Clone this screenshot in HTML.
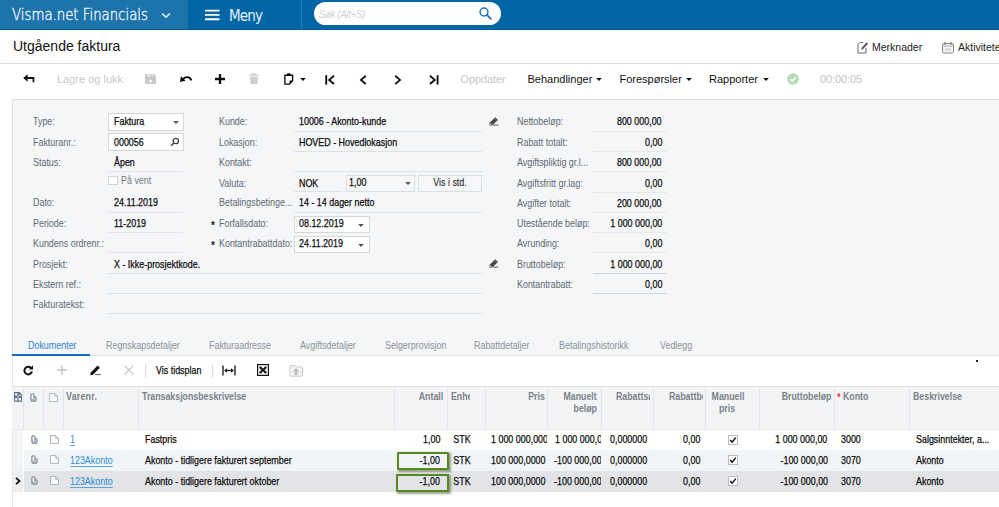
<!DOCTYPE html>
<html><head><meta charset="utf-8"><title>Utgående faktura</title>
<style>
*{box-sizing:border-box;margin:0;padding:0}
html,body{width:999px;height:507px;overflow:hidden;background:#fff}
body{position:relative;font-family:"Liberation Sans",Arial,sans-serif;font-size:11px;color:#111}
.a{position:absolute;display:block}
.t{position:absolute;white-space:nowrap}
.v{-webkit-text-stroke:0.25px currentColor}
</style></head><body>
<div class="a" style="left:0px;top:0px;width:999px;height:30.3px;background:#0065a5;"></div>
<div class="a" style="left:0px;top:0px;width:188.2px;height:30.3px;background:#1c74ab;"></div>
<div class="a" style="left:0px;top:28.8px;width:999px;height:1.5px;background:#01579a;"></div>
<div class="t " style="top:8.46px;font-size:16px;line-height:14px;color:#eef5fa;left:12px;transform-origin:0 50%;transform:scaleX(0.831);font-family:'DejaVu Sans Light','DejaVu Sans',sans-serif;font-weight:200;-webkit-text-stroke:0.4px #eef5fa;">Visma.net Financials</div>
<svg class="a" style="left:159px;top:11px" width="14" height="9" viewBox="0 0 14 9"><path d="M3.2 2.6 L7 6.2 L10.8 2.6" fill="none" stroke="#e6f1f8" stroke-width="1.5"/></svg>
<svg class="a" style="left:205px;top:9px" width="15" height="12" viewBox="0 0 15 12"><path d="M0 1.6h14.5M0 5.9h14.5M0 10.2h14.5" stroke="#fff" stroke-width="1.9"/></svg>
<div class="t " style="top:8.80px;font-size:15px;line-height:14px;color:#e6f1f8;left:229px;transform-origin:0 50%;font-family:'DejaVu Sans Condensed','DejaVu Sans',sans-serif;letter-spacing:-0.8px;">Meny</div>
<div class="a" style="left:301px;top:0px;width:1px;height:29px;background:#2b7cb3;"></div>
<div class="a" style="left:314px;top:2px;width:187px;height:23px;border-radius:12px;background:#fff"></div>
<div class="t " style="top:7.54px;font-size:10px;line-height:14px;color:#d2d2d2;left:318.5px;transform-origin:0 50%;font-style:italic;letter-spacing:-0.45px;">Søk (Alt+S)</div>
<svg class="a" style="left:478px;top:6px" width="15" height="15" viewBox="0 0 15 15"><circle cx="6" cy="6" r="3.9" fill="none" stroke="#1a75c4" stroke-width="1.5"/><path d="M9 9 L12.8 12.8" stroke="#1a75c4" stroke-width="1.8" stroke-linecap="round"/></svg>
<div class="t " style="top:39.15px;font-size:14px;line-height:14px;color:#111;left:13px;transform-origin:0 50%;">Utgående faktura</div>
<div class="a" style="left:0px;top:63px;width:999px;height:1px;background:#dedede;"></div>
<svg class="a" style="left:857px;top:41px" width="12" height="13" viewBox="0 0 12 13"><path d="M6 1.5H3.2L1 3.7V12h8V7" fill="none" stroke="#666" stroke-width="1"/><path d="M4 9l1-2.6L9.6 1.3l1.4 1.4L6.2 8z" fill="#555"/></svg>
<div class="t " style="top:40.36px;font-size:10.5px;line-height:14px;color:#222;left:872px;transform-origin:0 50%;">Merknader</div>
<svg class="a" style="left:942px;top:41px" width="12" height="13" viewBox="0 0 12 13"><rect x="0.5" y="2.5" width="11" height="9.5" rx="1.5" fill="#f4f4f4" stroke="#888"/><path d="M0.5 5h11" stroke="#aaa"/><path d="M3 0.8v3M9 0.8v3" stroke="#777" stroke-width="1.2"/><rect x="3" y="7" width="6" height="3" fill="#ddd"/></svg>
<div class="t " style="top:40.36px;font-size:10.5px;line-height:14px;color:#222;left:958px;transform-origin:0 50%;">Aktiviteter</div>
<svg class="a" style="left:23px;top:74.3px" width="12" height="9" viewBox="0 0 12 9"><path d="M0.2 4 L4.6 0.2 V3 H11.3 V8.2 H9.6 V5 H4.6 V7.8 Z" fill="#111"/></svg>
<div class="t " style="top:72.19px;font-size:11px;line-height:14px;color:#c8c8c8;left:57px;transform-origin:0 50%;">Lagre og lukk</div>
<svg class="a" style="left:145px;top:74px" width="11" height="10" viewBox="0 0 11 10"><path d="M0 0h9.2l1.8 1.8v8.2H0z" fill="#c9c9c9"/><rect x="2.2" y="0" width="5.6" height="3" fill="#e6e6e6"/><rect x="5.2" y="0.4" width="1.6" height="2.2" fill="#c9c9c9"/><circle cx="5.5" cy="6.9" r="1.5" fill="#fff"/></svg>
<svg class="a" style="left:179.5px;top:75.3px" width="12" height="8" viewBox="0 0 12 8"><path d="M3 4.6 C4.6 1.4 9.8 1 11.4 5.4" fill="none" stroke="#111" stroke-width="1.9"/><path d="M0 7 L0.9 1.2 L5.6 5.8 Z" fill="#111"/></svg>
<svg class="a" style="left:215px;top:73.7px" width="10" height="10" viewBox="0 0 10 10"><path d="M5 0v10M0 5h10" stroke="#111" stroke-width="2.3"/></svg>
<svg class="a" style="left:249px;top:73px" width="10" height="11" viewBox="0 0 10 11"><path d="M0.3 1.4h9.4v1.3h-9.4zM3.4 0.2h3.2v1.3H3.4zM1.2 3.4h7.6l-0.6 7.6H1.8z" fill="#cbcbcb"/><path d="M3.5 4.2v6M5 4.2v6M6.5 4.2v6" stroke="#dcdcdc" stroke-width="0.6"/></svg>
<svg class="a" style="left:284.3px;top:73px" width="10" height="12" viewBox="0 0 10 12"><path d="M0.9 2.3h7.7v5.4l-3.1 3.4H0.9z" fill="none" stroke="#111" stroke-width="1.4"/><rect x="2.9" y="0.3" width="3.7" height="2.4" rx="0.6" fill="#111"/><path d="M8.6 7.6H5.6v3.3z" fill="#111"/></svg>
<svg class="a" style="left:299.5px;top:78px" width="6" height="3" viewBox="0 0 6 3"><path d="M0.2 0.1h5.6L3 3z" fill="#111"/></svg>
<svg class="a" style="left:324px;top:75px" width="12" height="10" viewBox="0 0 12 10"><path d="M2.2 0.2v9.4" stroke="#111" stroke-width="1.9"/><path d="M10 0.8 L5.2 4.9 L10 9" fill="none" stroke="#111" stroke-width="1.9"/></svg>
<svg class="a" style="left:358px;top:74.6px" width="10" height="10" viewBox="0 0 10 10"><path d="M7.8 0.7 L3 4.9 L7.8 9.1" fill="none" stroke="#111" stroke-width="1.9"/></svg>
<svg class="a" style="left:393px;top:74.8px" width="10" height="10" viewBox="0 0 10 10"><path d="M2.2 0.7 L7 4.9 L2.2 9.1" fill="none" stroke="#111" stroke-width="1.9"/></svg>
<svg class="a" style="left:427.5px;top:75px" width="12" height="10" viewBox="0 0 12 10"><path d="M9.6 0.2v9.4" stroke="#111" stroke-width="1.9"/><path d="M1.9 0.8 L6.7 4.9 L1.9 9" fill="none" stroke="#111" stroke-width="1.9"/></svg>
<div class="t " style="top:72.19px;font-size:11px;line-height:14px;color:#c6c6c6;left:460.5px;transform-origin:0 50%;letter-spacing:-0.1px;">Oppdater</div>
<div class="t " style="top:72.19px;font-size:11px;line-height:14px;color:#111;left:527.5px;transform-origin:0 50%;">Behandlinger</div>
<svg class="a" style="left:596.3px;top:78px" width="6" height="3" viewBox="0 0 6 3"><path d="M0.2 0.1h5.6L3 3z" fill="#111"/></svg>
<div class="t " style="top:72.19px;font-size:11px;line-height:14px;color:#111;left:619.5px;transform-origin:0 50%;">Forespørsler</div>
<svg class="a" style="left:686.3px;top:78px" width="6" height="3" viewBox="0 0 6 3"><path d="M0.2 0.1h5.6L3 3z" fill="#111"/></svg>
<div class="t " style="top:72.19px;font-size:11px;line-height:14px;color:#111;left:709px;transform-origin:0 50%;">Rapporter</div>
<svg class="a" style="left:762.5px;top:78px" width="6" height="3" viewBox="0 0 6 3"><path d="M0.2 0.1h5.6L3 3z" fill="#111"/></svg>
<svg class="a" style="left:787px;top:73px" width="12" height="12" viewBox="0 0 12 12"><circle cx="6" cy="6" r="5.8" fill="#b2dbb2"/><path d="M3.2 6.2 L5.2 8.2 L8.8 4" fill="none" stroke="#fff" stroke-width="1.6"/></svg>
<div class="t " style="top:72.19px;font-size:11px;line-height:14px;color:#c2c2c2;left:820px;transform-origin:0 50%;letter-spacing:-0.1px;">00:00:05</div>
<div class="a" style="left:12px;top:99px;width:987px;height:257px;background:#f5f6f8;"></div>
<div class="a" style="left:12px;top:99px;width:987px;height:1px;background:#dadbde;"></div>
<div class="a" style="left:12px;top:99px;width:1px;height:257px;background:#dfe1e4;"></div>
<div class="a" style="left:12px;top:356px;width:1px;height:151px;background:#e6e8ea;"></div>
<div class="t " style="top:114.36px;font-size:10.5px;line-height:14px;color:#5d6872;left:33px;transform-origin:0 50%;transform:scaleX(0.849);">Type:</div>
<div class="t " style="top:134.86px;font-size:10.5px;line-height:14px;color:#5d6872;left:33px;transform-origin:0 50%;transform:scaleX(0.849);">Fakturanr.:</div>
<div class="t " style="top:155.36px;font-size:10.5px;line-height:14px;color:#5d6872;left:33px;transform-origin:0 50%;transform:scaleX(0.849);">Status:</div>
<div class="t " style="top:195.36px;font-size:10.5px;line-height:14px;color:#5d6872;left:33px;transform-origin:0 50%;transform:scaleX(0.849);">Dato:</div>
<div class="t " style="top:215.86px;font-size:10.5px;line-height:14px;color:#5d6872;left:33px;transform-origin:0 50%;transform:scaleX(0.849);">Periode:</div>
<div class="t " style="top:236.36px;font-size:10.5px;line-height:14px;color:#5d6872;left:33px;transform-origin:0 50%;transform:scaleX(0.849);">Kundens ordrenr.:</div>
<div class="t " style="top:256.76px;font-size:10.5px;line-height:14px;color:#5d6872;left:33px;transform-origin:0 50%;transform:scaleX(0.849);">Prosjekt:</div>
<div class="t " style="top:277.06px;font-size:10.5px;line-height:14px;color:#5d6872;left:33px;transform-origin:0 50%;transform:scaleX(0.849);">Ekstern ref.:</div>
<div class="t " style="top:297.36px;font-size:10.5px;line-height:14px;color:#5d6872;left:33px;transform-origin:0 50%;transform:scaleX(0.849);">Fakturatekst:</div>
<div class="a" style="left:108px;top:113px;width:75.5px;height:18px;background:#fff;border:1px solid #d5d8db"></div>
<div class="t v" style="top:114.36px;font-size:10.5px;line-height:14px;color:#0c0c0c;left:114px;transform-origin:0 50%;transform:scaleX(0.849);">Faktura</div>
<svg class="a" style="left:172.5px;top:121px" width="6" height="3" viewBox="0 0 6 3"><path d="M0.2 0.1h5.6L3 3z" fill="#555"/></svg>
<div class="a" style="left:108px;top:133px;width:75.5px;height:18px;background:#fff;border:1px solid #d5d8db"></div>
<div class="t v" style="top:134.86px;font-size:10.5px;line-height:14px;color:#0c0c0c;left:114px;transform-origin:0 50%;transform:scaleX(0.849);">000056</div>
<svg class="a" style="left:170px;top:137px" width="10" height="10" viewBox="0 0 10 10"><circle cx="5.8" cy="4" r="2.7" fill="none" stroke="#444" stroke-width="1.3"/><path d="M3.8 6 L1.2 8.8" stroke="#444" stroke-width="1.6"/></svg>
<div class="t v" style="top:155.36px;font-size:10.5px;line-height:14px;color:#0c0c0c;left:114px;transform-origin:0 50%;transform:scaleX(0.849);">Åpen</div>
<div class="a" style="left:108px;top:171px;width:75px;height:1px;background:#e3e5e8;"></div>
<div class="a" style="left:108px;top:176.3px;width:9.5px;height:9px;background:#fff;border:1px solid #d2d5d8"></div>
<div class="t " style="top:172.56px;font-size:10.5px;line-height:14px;color:#717b84;left:121px;transform-origin:0 50%;transform:scaleX(0.849);">På vent</div>
<div class="t v" style="top:195.36px;font-size:10.5px;line-height:14px;color:#0c0c0c;left:114px;transform-origin:0 50%;transform:scaleX(0.849);">24.11.2019</div>
<div class="a" style="left:108px;top:212px;width:75px;height:1px;background:#e3e5e8;"></div>
<div class="t v" style="top:215.86px;font-size:10.5px;line-height:14px;color:#0c0c0c;left:114px;transform-origin:0 50%;transform:scaleX(0.849);">11-2019</div>
<div class="a" style="left:108px;top:232px;width:75px;height:1px;background:#e3e5e8;"></div>
<div class="a" style="left:108px;top:252px;width:75px;height:1px;background:#e3e5e8;"></div>
<div class="t v" style="top:256.76px;font-size:10.5px;line-height:14px;color:#0c0c0c;left:114px;transform-origin:0 50%;transform:scaleX(0.849);">X - Ikke-prosjektkode.</div>
<div class="a" style="left:108px;top:273px;width:373.5px;height:1px;background:#dfe2e5;"></div>
<div class="a" style="left:108px;top:293px;width:373.5px;height:1px;background:#dfe2e5;"></div>
<div class="a" style="left:108px;top:313px;width:373.5px;height:1px;background:#dfe2e5;"></div>
<div class="t " style="top:114.36px;font-size:10.5px;line-height:14px;color:#5d6872;left:219px;transform-origin:0 50%;transform:scaleX(0.849);">Kunde:</div>
<div class="t " style="top:134.86px;font-size:10.5px;line-height:14px;color:#5d6872;left:219px;transform-origin:0 50%;transform:scaleX(0.849);">Lokasjon:</div>
<div class="t " style="top:155.36px;font-size:10.5px;line-height:14px;color:#5d6872;left:219px;transform-origin:0 50%;transform:scaleX(0.849);">Kontakt:</div>
<div class="t " style="top:175.56px;font-size:10.5px;line-height:14px;color:#5d6872;left:219px;transform-origin:0 50%;transform:scaleX(0.849);">Valuta:</div>
<div class="t " style="top:195.36px;font-size:10.5px;line-height:14px;color:#5d6872;left:219px;transform-origin:0 50%;transform:scaleX(0.849);">Betalingsbetinge...</div>
<div class="t " style="top:215.86px;font-size:10.5px;line-height:14px;color:#5d6872;left:219px;transform-origin:0 50%;transform:scaleX(0.849);">Forfallsdato:</div>
<div class="t " style="top:236.36px;font-size:10.5px;line-height:14px;color:#5d6872;left:219px;transform-origin:0 50%;transform:scaleX(0.849);">Kontantrabattdato:</div>
<div class="t " style="top:218.53px;font-size:10px;line-height:14px;color:#222;font-weight:bold;left:211px;transform-origin:0 50%;">*</div>
<div class="t " style="top:239.03px;font-size:10px;line-height:14px;color:#222;font-weight:bold;left:211px;transform-origin:0 50%;">*</div>
<div class="t v" style="top:114.36px;font-size:10.5px;line-height:14px;color:#0c0c0c;left:299px;transform-origin:0 50%;transform:scaleX(0.849);">10006 - Akonto-kunde</div>
<div class="a" style="left:294px;top:131px;width:187.5px;height:1px;background:#dfe2e5;"></div>
<div class="t v" style="top:134.86px;font-size:10.5px;line-height:14px;color:#0c0c0c;left:299px;transform-origin:0 50%;transform:scaleX(0.849);">HOVED - Hovedlokasjon</div>
<div class="a" style="left:294px;top:151px;width:187.5px;height:1px;background:#dfe2e5;"></div>
<div class="a" style="left:294px;top:171px;width:187.5px;height:1px;background:#dfe2e5;"></div>
<div class="t v" style="top:175.56px;font-size:10.5px;line-height:14px;color:#0c0c0c;left:299px;transform-origin:0 50%;transform:scaleX(0.849);">NOK</div>
<div class="a" style="left:294px;top:190.5px;width:47px;height:1px;background:#dfe2e5;"></div>
<div class="a" style="left:346px;top:174.5px;width:68.5px;height:17.5px;background:#f6f7f8;border:1px solid #dcdfe2"></div>
<div class="t v" style="top:175.06px;font-size:10.5px;line-height:14px;color:#0c0c0c;left:349px;transform-origin:0 50%;transform:scaleX(0.849);">1,00</div>
<svg class="a" style="left:404.5px;top:182.3px" width="6" height="3" viewBox="0 0 6 3"><path d="M0.2 0.1h5.6L3 3z" fill="#555"/></svg>
<div class="a" style="left:418px;top:174.5px;width:64px;height:17.5px;background:#f6f7f8;border:1px solid #dcdfe2"></div>
<div class="t " style="top:175.06px;font-size:10.5px;line-height:14px;color:#0c0c0c;left:350px;width:200px;text-align:center;transform-origin:50% 50%;transform:scaleX(0.849);">Vis i std.</div>
<div class="t v" style="top:195.36px;font-size:10.5px;line-height:14px;color:#0c0c0c;left:299px;transform-origin:0 50%;transform:scaleX(0.849);">14 - 14 dager netto</div>
<div class="a" style="left:294px;top:212px;width:187.5px;height:1px;background:#dfe2e5;"></div>
<div class="a" style="left:294px;top:215.5px;width:75.5px;height:17.5px;background:#fff;border:1px solid #d5d8db"></div>
<div class="t v" style="top:215.86px;font-size:10.5px;line-height:14px;color:#0c0c0c;left:299px;transform-origin:0 50%;transform:scaleX(0.849);">08.12.2019</div>
<svg class="a" style="left:358px;top:223.8px" width="6" height="3" viewBox="0 0 6 3"><path d="M0.2 0.1h5.6L3 3z" fill="#555"/></svg>
<div class="a" style="left:294px;top:235.5px;width:75.5px;height:17.5px;background:#fff;border:1px solid #d5d8db"></div>
<div class="t v" style="top:236.36px;font-size:10.5px;line-height:14px;color:#0c0c0c;left:299px;transform-origin:0 50%;transform:scaleX(0.849);">24.11.2019</div>
<svg class="a" style="left:358px;top:243.8px" width="6" height="3" viewBox="0 0 6 3"><path d="M0.2 0.1h5.6L3 3z" fill="#555"/></svg>
<svg class="a" style="left:488.6px;top:117.4px" width="10" height="9" viewBox="0 0 10 9"><path d="M0.3 8.5 L0.6 5.8 L6.3 0.2 L9 2.9 L3.2 8.5 Z" fill="#484848"/><path d="M5.5 1.3 L7.9 3.7" stroke="#9a9a9a" stroke-width="0.6"/><circle cx="1.6" cy="7.3" r="0.7" fill="#eee"/><path d="M4 8.1h5.3" stroke="#484848" stroke-width="0.9"/></svg>
<svg class="a" style="left:488.6px;top:259.4px" width="10" height="9" viewBox="0 0 10 9"><path d="M0.3 8.5 L0.6 5.8 L6.3 0.2 L9 2.9 L3.2 8.5 Z" fill="#484848"/><path d="M5.5 1.3 L7.9 3.7" stroke="#9a9a9a" stroke-width="0.6"/><circle cx="1.6" cy="7.3" r="0.7" fill="#eee"/><path d="M4 8.1h5.3" stroke="#484848" stroke-width="0.9"/></svg>
<div class="t " style="top:114.36px;font-size:10.5px;line-height:14px;color:#5d6872;left:517px;transform-origin:0 50%;transform:scaleX(0.849);">Nettobeløp:</div>
<div class="t v" style="top:114.36px;font-size:10.5px;line-height:14px;color:#0c0c0c;right:337.00px;transform-origin:100% 50%;text-align:right;transform:scaleX(0.849);">800 000,00</div>
<div class="a" style="left:592.5px;top:131px;width:74.5px;height:1px;background:#e6e8ea;"></div>
<div class="t " style="top:134.86px;font-size:10.5px;line-height:14px;color:#5d6872;left:517px;transform-origin:0 50%;transform:scaleX(0.849);">Rabatt totalt:</div>
<div class="t v" style="top:134.86px;font-size:10.5px;line-height:14px;color:#0c0c0c;right:337.00px;transform-origin:100% 50%;text-align:right;transform:scaleX(0.849);">0,00</div>
<div class="a" style="left:592.5px;top:151px;width:74.5px;height:1px;background:#e6e8ea;"></div>
<div class="t " style="top:155.16px;font-size:10.5px;line-height:14px;color:#5d6872;left:517px;transform-origin:0 50%;transform:scaleX(0.849);">Avgiftspliktig gr.l...</div>
<div class="t v" style="top:155.16px;font-size:10.5px;line-height:14px;color:#0c0c0c;right:337.00px;transform-origin:100% 50%;text-align:right;transform:scaleX(0.849);">800 000,00</div>
<div class="a" style="left:592.5px;top:171px;width:74.5px;height:1px;background:#e6e8ea;"></div>
<div class="t " style="top:175.56px;font-size:10.5px;line-height:14px;color:#5d6872;left:517px;transform-origin:0 50%;transform:scaleX(0.849);">Avgiftsfritt gr.lag:</div>
<div class="t v" style="top:175.56px;font-size:10.5px;line-height:14px;color:#0c0c0c;right:337.00px;transform-origin:100% 50%;text-align:right;transform:scaleX(0.849);">0,00</div>
<div class="a" style="left:592.5px;top:192px;width:74.5px;height:1px;background:#e6e8ea;"></div>
<div class="t " style="top:195.56px;font-size:10.5px;line-height:14px;color:#5d6872;left:517px;transform-origin:0 50%;transform:scaleX(0.849);">Avgifter totalt:</div>
<div class="t v" style="top:195.56px;font-size:10.5px;line-height:14px;color:#0c0c0c;right:337.00px;transform-origin:100% 50%;text-align:right;transform:scaleX(0.849);">200 000,00</div>
<div class="a" style="left:592.5px;top:212px;width:74.5px;height:1px;background:#e6e8ea;"></div>
<div class="t " style="top:216.06px;font-size:10.5px;line-height:14px;color:#5d6872;left:517px;transform-origin:0 50%;transform:scaleX(0.849);">Utestående beløp:</div>
<div class="t v" style="top:216.06px;font-size:10.5px;line-height:14px;color:#0c0c0c;right:337.00px;transform-origin:100% 50%;text-align:right;transform:scaleX(0.849);">1 000 000,00</div>
<div class="a" style="left:592.5px;top:232px;width:74.5px;height:1px;background:#e6e8ea;"></div>
<div class="t " style="top:236.36px;font-size:10.5px;line-height:14px;color:#5d6872;left:517px;transform-origin:0 50%;transform:scaleX(0.849);">Avrunding:</div>
<div class="t v" style="top:236.36px;font-size:10.5px;line-height:14px;color:#0c0c0c;right:337.00px;transform-origin:100% 50%;text-align:right;transform:scaleX(0.849);">0,00</div>
<div class="a" style="left:592.5px;top:252px;width:74.5px;height:1px;background:#e6e8ea;"></div>
<div class="t " style="top:256.86px;font-size:10.5px;line-height:14px;color:#5d6872;left:517px;transform-origin:0 50%;transform:scaleX(0.849);">Bruttobeløp:</div>
<div class="t v" style="top:256.86px;font-size:10.5px;line-height:14px;color:#0c0c0c;right:337.00px;transform-origin:100% 50%;text-align:right;transform:scaleX(0.849);">1 000 000,00</div>
<div class="a" style="left:592.5px;top:273px;width:74.5px;height:1px;background:#d3d6da;"></div>
<div class="t " style="top:277.16px;font-size:10.5px;line-height:14px;color:#5d6872;left:517px;transform-origin:0 50%;transform:scaleX(0.849);">Kontantrabatt:</div>
<div class="t v" style="top:277.16px;font-size:10.5px;line-height:14px;color:#0c0c0c;right:337.00px;transform-origin:100% 50%;text-align:right;transform:scaleX(0.849);">0,00</div>
<div class="a" style="left:592.5px;top:293px;width:74.5px;height:1px;background:#d3d6da;"></div>
<div class="t " style="top:337.66px;font-size:10.5px;line-height:14px;color:#2b83cf;left:28.3px;transform-origin:0 50%;transform:scaleX(0.849);">Dokumenter</div>
<div class="t " style="top:337.66px;font-size:10.5px;line-height:14px;color:#8a9198;left:105.5px;transform-origin:0 50%;transform:scaleX(0.849);">Regnskapsdetaljer</div>
<div class="t " style="top:337.66px;font-size:10.5px;line-height:14px;color:#8a9198;left:209px;transform-origin:0 50%;transform:scaleX(0.849);">Fakturaadresse</div>
<div class="t " style="top:337.66px;font-size:10.5px;line-height:14px;color:#8a9198;left:300px;transform-origin:0 50%;transform:scaleX(0.849);">Avgiftsdetaljer</div>
<div class="t " style="top:337.66px;font-size:10.5px;line-height:14px;color:#8a9198;left:385px;transform-origin:0 50%;transform:scaleX(0.849);">Selgerprovisjon</div>
<div class="t " style="top:337.66px;font-size:10.5px;line-height:14px;color:#8a9198;left:474px;transform-origin:0 50%;transform:scaleX(0.849);">Rabattdetaljer</div>
<div class="t " style="top:337.66px;font-size:10.5px;line-height:14px;color:#8a9198;left:559px;transform-origin:0 50%;transform:scaleX(0.849);">Betalingshistorikk</div>
<div class="t " style="top:337.66px;font-size:10.5px;line-height:14px;color:#8a9198;left:659.5px;transform-origin:0 50%;transform:scaleX(0.849);">Vedlegg</div>
<div class="a" style="left:12px;top:355px;width:987px;height:1px;background:#dfe1e3;"></div>
<div class="a" style="left:12px;top:353.7px;width:77.5px;height:2.1px;background:#0f6cc8;"></div>
<div class="a" style="left:13px;top:356px;width:986px;height:151px;background:#fff;"></div>
<svg class="a" style="left:23px;top:365.4px" width="10.3" height="10.3" viewBox="0 0 10 10"><path d="M7.6 2.7 A3.7 3.7 0 1 0 8.7 6.2" fill="none" stroke="#111" stroke-width="1.9"/><path d="M9.8 0.2 V4.4 H5.6 Z" fill="#111"/></svg>
<svg class="a" style="left:57.3px;top:365.1px" width="10" height="10" viewBox="0 0 10 10"><path d="M5 0.2v9.6M0.2 5h9.6" stroke="#c2c2c2" stroke-width="1.5"/></svg>
<svg class="a" style="left:89.6px;top:365px" width="11" height="11" viewBox="0 0 11 11"><path d="M0.3 10.2 L0.8 7.5 L7.6 0.5 L9.9 2.8 L3 9.8 Z" fill="#111"/><path d="M5 9.6h5.7" stroke="#444" stroke-width="0.9"/></svg>
<svg class="a" style="left:123.6px;top:365.3px" width="10" height="10" viewBox="0 0 10 10"><path d="M0.5 0.5 L9.5 9.5 M9.5 0.5 L0.5 9.5" stroke="#c9c9c9" stroke-width="1.3"/></svg>
<div class="a" style="left:145px;top:364px;width:1px;height:14px;background:#dddddd;"></div>
<div class="t v" style="top:363.16px;font-size:10.5px;line-height:14px;color:#111;left:155.5px;transform-origin:0 50%;transform:scaleX(0.849);">Vis tidsplan</div>
<div class="a" style="left:212px;top:364px;width:1px;height:14px;background:#dddddd;"></div>
<svg class="a" style="left:222px;top:365px" width="14" height="11" viewBox="0 0 14 11"><path d="M1 0.5v10M13 0.5v10" stroke="#111" stroke-width="1.3"/><path d="M3 5.5h8" stroke="#111" stroke-width="1.3"/><path d="M2.2 5.5 L5 3.2 V7.8 Z M11.8 5.5 L9 3.2 V7.8 Z" fill="#111"/></svg>
<svg class="a" style="left:256.8px;top:364px" width="12" height="12" viewBox="0 0 12 12"><rect x="0.6" y="0.6" width="10.8" height="10.8" fill="#fff" stroke="#111" stroke-width="1.2"/><path d="M3 3.2 L9 8.8 M9 3.2 L3 8.8" stroke="#111" stroke-width="2.1"/><path d="M2.2 3.2h2.4M7.4 3.2h2.4M2.2 8.8h2.4M7.4 8.8h2.4" stroke="#111" stroke-width="0.9"/></svg>
<svg class="a" style="left:289.2px;top:364.6px" width="14" height="12" viewBox="0 0 14 12"><path d="M1.8 0.6h4.4l1.2 1.4h5.2a0.9 0.9 0 0 1 0.9 0.9v7.4a0.9 0.9 0 0 1 -0.9 0.9h-10.8a0.9 0.9 0 0 1 -0.9 -0.9v-8.8a0.9 0.9 0 0 1 0.9 -0.9z" fill="#f4f4f4" stroke="#c9c9c9" stroke-width="1"/><path d="M7 3 L10.6 6.8 H8.4 V10.2 H5.6 V6.8 H3.4 Z" fill="#bcbcbc"/></svg>
<div class="a" style="left:12px;top:386px;width:987px;height:43px;background:#f3f4f5;"></div>
<div class="a" style="left:12px;top:386px;width:987px;height:1px;background:#dfe1e4;"></div>
<div class="a" style="left:12px;top:428.5px;width:987px;height:1px;background:#e6e8ea;"></div>
<div class="a" style="left:23px;top:387px;width:1px;height:42px;background:#e2e4e8;"></div>
<div class="a" style="left:43px;top:387px;width:1px;height:42px;background:#e2e4e8;"></div>
<div class="a" style="left:63px;top:387px;width:1px;height:42px;background:#e2e4e8;"></div>
<div class="a" style="left:138px;top:387px;width:1px;height:42px;background:#e2e4e8;"></div>
<div class="a" style="left:394px;top:387px;width:1px;height:42px;background:#e2e4e8;"></div>
<div class="a" style="left:446.6px;top:387px;width:1px;height:42px;background:#e2e4e8;"></div>
<div class="a" style="left:484.6px;top:387px;width:1px;height:42px;background:#e2e4e8;"></div>
<div class="a" style="left:547px;top:387px;width:1px;height:42px;background:#e2e4e8;"></div>
<div class="a" style="left:601px;top:387px;width:1px;height:42px;background:#e2e4e8;"></div>
<div class="a" style="left:653px;top:387px;width:1px;height:42px;background:#e2e4e8;"></div>
<div class="a" style="left:705.4px;top:387px;width:1px;height:42px;background:#e2e4e8;"></div>
<div class="a" style="left:759px;top:387px;width:1px;height:42px;background:#e2e4e8;"></div>
<div class="a" style="left:834px;top:387px;width:1px;height:42px;background:#e2e4e8;"></div>
<div class="a" style="left:909px;top:387px;width:1px;height:42px;background:#e2e4e8;"></div>
<div class="t " style="top:388.86px;font-size:10.5px;line-height:14px;color:#7a828a;font-weight:bold;left:66.3px;transform-origin:0 50%;transform:scaleX(0.838);letter-spacing:0.3px;">Varenr.</div>
<div class="t " style="top:388.86px;font-size:10.5px;line-height:14px;color:#7a828a;font-weight:bold;left:141.8px;transform-origin:0 50%;transform:scaleX(0.838);">Transaksjonsbeskrivelse</div>
<div class="t " style="top:388.86px;font-size:10.5px;line-height:14px;color:#7a828a;font-weight:bold;right:555.50px;transform-origin:100% 50%;text-align:right;transform:scaleX(0.838);">Antall</div>
<div class="a" style="left:450.5px;top:388px;width:19.5px;height:20px;overflow:hidden">
<div class="t" style="left:0;top:0.86px;font-size:10.5px;line-height:14px;color:#7a828a;font-weight:bold;transform:scaleX(.838);transform-origin:0 50%">Enhet</div></div>
<div class="t " style="top:388.86px;font-size:10.5px;line-height:14px;color:#7a828a;font-weight:bold;right:454.50px;transform-origin:100% 50%;text-align:right;transform:scaleX(0.838);">Pris</div>
<div class="t " style="top:388.86px;font-size:10.5px;line-height:14px;color:#7a828a;font-weight:bold;right:402.00px;transform-origin:100% 50%;text-align:right;transform:scaleX(0.838);">Manuelt</div>
<div class="t " style="top:400.86px;font-size:10.5px;line-height:14px;color:#7a828a;font-weight:bold;right:402.00px;transform-origin:100% 50%;text-align:right;transform:scaleX(0.838);">beløp</div>
<div class="a" style="left:605px;top:388px;width:45.3px;height:20px;overflow:hidden">
<div class="t" style="left:10.7px;top:0.86px;font-size:10.5px;line-height:14px;color:#7a828a;font-weight:bold;transform:scaleX(.838);transform-origin:0 50%">Rabattsats</div></div>
<div class="a" style="left:660px;top:388px;width:42.5px;height:20px;overflow:hidden">
<div class="t" style="left:8.7px;top:0.86px;font-size:10.5px;line-height:14px;color:#7a828a;font-weight:bold;transform:scaleX(.838);transform-origin:0 50%">Rabattbeløp</div></div>
<div class="t " style="top:388.86px;font-size:10.5px;line-height:14px;color:#7a828a;font-weight:bold;left:627.5px;width:200px;text-align:center;transform-origin:50% 50%;transform:scaleX(0.838);">Manuell</div>
<div class="t " style="top:400.86px;font-size:10.5px;line-height:14px;color:#7a828a;font-weight:bold;left:626.5px;width:200px;text-align:center;transform-origin:50% 50%;transform:scaleX(0.838);">pris</div>
<div class="t " style="top:388.86px;font-size:10.5px;line-height:14px;color:#7a828a;font-weight:bold;right:167.50px;transform-origin:100% 50%;text-align:right;transform:scaleX(0.838);">Bruttobeløp</div>
<div class="t " style="top:389.86px;font-size:10.5px;line-height:14px;color:#f03232;font-weight:bold;left:837.3px;transform-origin:0 50%;transform:scaleX(0.9);">*</div>
<div class="t " style="top:388.86px;font-size:10.5px;line-height:14px;color:#7a828a;font-weight:bold;left:843px;transform-origin:0 50%;transform:scaleX(0.838);">Konto</div>
<div class="t " style="top:388.86px;font-size:10.5px;line-height:14px;color:#7a828a;font-weight:bold;left:912.5px;transform-origin:0 50%;transform:scaleX(0.838);">Beskrivelse</div>
<svg class="a" style="left:14px;top:392.1px" width="8.2" height="9.8" viewBox="0 0 8.2 9.8"><path d="M0 0h5.6l2.6 2.6v7.2h-8.2z" fill="#63718a"/><rect x="1.1" y="1.3" width="2.2" height="2.2" fill="#fff"/><rect x="4.5" y="2.7" width="2.5" height="0.9" fill="#fff"/><rect x="1.1" y="6.2" width="2.2" height="2.3" fill="#fff"/><rect x="4.5" y="6.2" width="2.5" height="2.3" fill="#fff"/><rect x="2.6" y="4.2" width="3" height="1.2" fill="#b8c0cd"/></svg>
<svg class="a" style="left:30.2px;top:392.8px" width="7" height="9" viewBox="0 0 7 9"><path d="M0.4 2.3 A1.9 1.9 0 0 1 4.2 2.3 V2.9 A2.7 2.7 0 0 1 6.6 5.6 V5.9 A3.1 3.1 0 0 1 0.4 5.9 Z" fill="#a7adb7" stroke="#858d99" stroke-width="0.7"/><rect x="1.8" y="1.7" width="1.2" height="4.2" rx="0.6" fill="#fff"/><path d="M3 6.2 A1.3 1.3 0 0 0 5.2 5.6" fill="none" stroke="#e8eaee" stroke-width="0.7"/></svg>
<svg class="a" style="left:49.3px;top:392.8px" width="9" height="9" viewBox="0 0 9 9"><path d="M0.5 0.5h5.2l2.8 2.8v5.2h-8z" fill="#fafbfc" stroke="#b1b6c0"/><path d="M5.7 0.5v2.8h2.8" fill="none" stroke="#b1b6c0"/></svg>
<div class="a" style="left:24px;top:429.5px;width:975px;height:20px;background:#ffffff;"></div>
<div class="a" style="left:13px;top:429.5px;width:10px;height:20px;background:#f3f4f5;"></div>
<svg class="a" style="left:31.1px;top:434.9px" width="7" height="9" viewBox="0 0 7 9"><path d="M0.4 2.3 A1.9 1.9 0 0 1 4.2 2.3 V2.9 A2.7 2.7 0 0 1 6.6 5.6 V5.9 A3.1 3.1 0 0 1 0.4 5.9 Z" fill="#a7adb7" stroke="#858d99" stroke-width="0.7"/><rect x="1.8" y="1.7" width="1.2" height="4.2" rx="0.6" fill="#fff"/><path d="M3 6.2 A1.3 1.3 0 0 0 5.2 5.6" fill="none" stroke="#e8eaee" stroke-width="0.7"/></svg>
<svg class="a" style="left:50.2px;top:434.9px" width="9" height="9" viewBox="0 0 9 9"><path d="M0.5 0.5h5.2l2.8 2.8v5.2h-8z" fill="#fafbfc" stroke="#b1b6c0"/><path d="M5.7 0.5v2.8h2.8" fill="none" stroke="#b1b6c0"/></svg>
<div class="t " style="top:432.36px;font-size:10.5px;line-height:14px;color:#2a8dd2;left:69.5px;transform-origin:0 50%;transform:scaleX(0.849);text-decoration:underline;text-decoration-color:#5aa6dc;text-decoration-thickness:0.8px;text-underline-offset:1.5px;">1</div>
<div class="t v" style="top:432.36px;font-size:10.5px;line-height:14px;color:#0c0c0c;left:144.5px;transform-origin:0 50%;transform:scaleX(0.849);">Fastpris</div>
<div class="t v" style="top:432.36px;font-size:10.5px;line-height:14px;color:#0c0c0c;right:559.00px;transform-origin:100% 50%;text-align:right;transform:scaleX(0.849);">1,00</div>
<div class="t v" style="top:432.36px;font-size:10.5px;line-height:14px;color:#0c0c0c;left:362px;width:200px;text-align:center;transform-origin:50% 50%;transform:scaleX(0.849);">STK</div>
<div class="a" style="left:488px;top:429.5px;width:59px;height:20px;overflow:hidden">
<div class="t v" style="left:3.4px;top:2.86px;font-size:10.5px;line-height:14px;color:#0c0c0c;transform:scaleX(0.849);transform-origin:0 50%">1 000 000,000</div></div>
<div class="a" style="left:550px;top:429.5px;width:50.5px;height:20px;overflow:hidden">
<div class="t v" style="left:5px;top:2.86px;font-size:10.5px;line-height:14px;color:#0c0c0c;transform:scaleX(0.849);transform-origin:0 50%">1 000 000,00</div></div>
<div class="t v" style="top:432.36px;font-size:10.5px;line-height:14px;color:#0c0c0c;left:610px;transform-origin:0 50%;transform:scaleX(0.849);">0,000000</div>
<div class="t v" style="top:432.36px;font-size:10.5px;line-height:14px;color:#0c0c0c;right:299.00px;transform-origin:100% 50%;text-align:right;transform:scaleX(0.849);">0,00</div>
<svg class="a" style="left:728px;top:434.5px" width="10" height="10" viewBox="0 0 10 10"><rect x="0.5" y="0.5" width="9" height="9" fill="#fff" stroke="#b9bdc1"/><path d="M2.2 5 L4.2 7.2 L7.8 2.6" fill="none" stroke="#111" stroke-width="1.5"/></svg>
<div class="t v" style="top:432.36px;font-size:10.5px;line-height:14px;color:#0c0c0c;right:171.40px;transform-origin:100% 50%;text-align:right;transform:scaleX(0.849);">1 000 000,00</div>
<div class="t v" style="top:432.36px;font-size:10.5px;line-height:14px;color:#0c0c0c;left:840.5px;transform-origin:0 50%;transform:scaleX(0.849);">3000</div>
<div class="t v" style="top:432.36px;font-size:10.5px;line-height:14px;color:#0c0c0c;left:916px;transform-origin:0 50%;transform:scaleX(0.849);">Salgsinntekter, a...</div>
<div class="a" style="left:24px;top:449.5px;width:975px;height:21px;background:#f2f5f8;"></div>
<div class="a" style="left:13px;top:449.5px;width:10px;height:21px;background:#f3f4f5;"></div>
<svg class="a" style="left:31.1px;top:454.9px" width="7" height="9" viewBox="0 0 7 9"><path d="M0.4 2.3 A1.9 1.9 0 0 1 4.2 2.3 V2.9 A2.7 2.7 0 0 1 6.6 5.6 V5.9 A3.1 3.1 0 0 1 0.4 5.9 Z" fill="#a7adb7" stroke="#858d99" stroke-width="0.7"/><rect x="1.8" y="1.7" width="1.2" height="4.2" rx="0.6" fill="#fff"/><path d="M3 6.2 A1.3 1.3 0 0 0 5.2 5.6" fill="none" stroke="#e8eaee" stroke-width="0.7"/></svg>
<svg class="a" style="left:50.2px;top:454.9px" width="9" height="9" viewBox="0 0 9 9"><path d="M0.5 0.5h5.2l2.8 2.8v5.2h-8z" fill="#fafbfc" stroke="#b1b6c0"/><path d="M5.7 0.5v2.8h2.8" fill="none" stroke="#b1b6c0"/></svg>
<div class="t " style="top:453.16px;font-size:10.5px;line-height:14px;color:#2a8dd2;left:69.5px;transform-origin:0 50%;transform:scaleX(0.849);text-decoration:underline;text-decoration-color:#5aa6dc;text-decoration-thickness:0.8px;text-underline-offset:1.5px;">123Akonto</div>
<div class="t v" style="top:453.16px;font-size:10.5px;line-height:14px;color:#0c0c0c;left:144.5px;transform-origin:0 50%;transform:scaleX(0.849);">Akonto - tidligere fakturert september</div>
<div class="t v" style="top:453.16px;font-size:10.5px;line-height:14px;color:#0c0c0c;right:559.00px;transform-origin:100% 50%;text-align:right;transform:scaleX(0.849);">-1,00</div>
<div class="t v" style="top:453.16px;font-size:10.5px;line-height:14px;color:#0c0c0c;left:362px;width:200px;text-align:center;transform-origin:50% 50%;transform:scaleX(0.849);">STK</div>
<div class="a" style="left:488px;top:449.5px;width:59px;height:21px;overflow:hidden">
<div class="t v" style="left:3.4px;top:3.66px;font-size:10.5px;line-height:14px;color:#0c0c0c;transform:scaleX(0.849);transform-origin:0 50%">100 000,0000</div></div>
<div class="a" style="left:550px;top:449.5px;width:50.5px;height:21px;overflow:hidden">
<div class="t v" style="left:3.5px;top:3.66px;font-size:10.5px;line-height:14px;color:#0c0c0c;transform:scaleX(0.849);transform-origin:0 50%">-100 000,00</div></div>
<div class="t v" style="top:453.16px;font-size:10.5px;line-height:14px;color:#0c0c0c;left:610px;transform-origin:0 50%;transform:scaleX(0.849);">0,000000</div>
<div class="t v" style="top:453.16px;font-size:10.5px;line-height:14px;color:#0c0c0c;right:299.00px;transform-origin:100% 50%;text-align:right;transform:scaleX(0.849);">0,00</div>
<svg class="a" style="left:728px;top:455.3px" width="10" height="10" viewBox="0 0 10 10"><rect x="0.5" y="0.5" width="9" height="9" fill="#fff" stroke="#b9bdc1"/><path d="M2.2 5 L4.2 7.2 L7.8 2.6" fill="none" stroke="#111" stroke-width="1.5"/></svg>
<div class="t v" style="top:453.16px;font-size:10.5px;line-height:14px;color:#0c0c0c;right:171.40px;transform-origin:100% 50%;text-align:right;transform:scaleX(0.849);">-100 000,00</div>
<div class="t v" style="top:453.16px;font-size:10.5px;line-height:14px;color:#0c0c0c;left:840.5px;transform-origin:0 50%;transform:scaleX(0.849);">3070</div>
<div class="t v" style="top:453.16px;font-size:10.5px;line-height:14px;color:#0c0c0c;left:916px;transform-origin:0 50%;transform:scaleX(0.849);">Akonto</div>
<div class="a" style="left:24px;top:470.5px;width:975px;height:21px;background:#e2e4e7;"></div>
<div class="a" style="left:13px;top:470.5px;width:10px;height:21px;background:#eceef0;"></div>
<svg class="a" style="left:31.1px;top:475.9px" width="7" height="9" viewBox="0 0 7 9"><path d="M0.4 2.3 A1.9 1.9 0 0 1 4.2 2.3 V2.9 A2.7 2.7 0 0 1 6.6 5.6 V5.9 A3.1 3.1 0 0 1 0.4 5.9 Z" fill="#a7adb7" stroke="#858d99" stroke-width="0.7"/><rect x="1.8" y="1.7" width="1.2" height="4.2" rx="0.6" fill="#fff"/><path d="M3 6.2 A1.3 1.3 0 0 0 5.2 5.6" fill="none" stroke="#e8eaee" stroke-width="0.7"/></svg>
<svg class="a" style="left:50.2px;top:475.9px" width="9" height="9" viewBox="0 0 9 9"><path d="M0.5 0.5h5.2l2.8 2.8v5.2h-8z" fill="#fafbfc" stroke="#b1b6c0"/><path d="M5.7 0.5v2.8h2.8" fill="none" stroke="#b1b6c0"/></svg>
<div class="t " style="top:473.66px;font-size:10.5px;line-height:14px;color:#2a8dd2;left:69.5px;transform-origin:0 50%;transform:scaleX(0.849);text-decoration:underline;text-decoration-color:#5aa6dc;text-decoration-thickness:0.8px;text-underline-offset:1.5px;">123Akonto</div>
<div class="t v" style="top:473.66px;font-size:10.5px;line-height:14px;color:#0c0c0c;left:144.5px;transform-origin:0 50%;transform:scaleX(0.849);">Akonto - tidligere fakturert oktober</div>
<div class="t v" style="top:473.66px;font-size:10.5px;line-height:14px;color:#0c0c0c;right:559.00px;transform-origin:100% 50%;text-align:right;transform:scaleX(0.849);">-1,00</div>
<div class="t v" style="top:473.66px;font-size:10.5px;line-height:14px;color:#0c0c0c;left:362px;width:200px;text-align:center;transform-origin:50% 50%;transform:scaleX(0.849);">STK</div>
<div class="a" style="left:488px;top:470.5px;width:59px;height:21px;overflow:hidden">
<div class="t v" style="left:3.4px;top:3.16px;font-size:10.5px;line-height:14px;color:#0c0c0c;transform:scaleX(0.849);transform-origin:0 50%">100 000,0000</div></div>
<div class="a" style="left:550px;top:470.5px;width:50.5px;height:21px;overflow:hidden">
<div class="t v" style="left:3.5px;top:3.16px;font-size:10.5px;line-height:14px;color:#0c0c0c;transform:scaleX(0.849);transform-origin:0 50%">-100 000,00</div></div>
<div class="t v" style="top:473.66px;font-size:10.5px;line-height:14px;color:#0c0c0c;left:610px;transform-origin:0 50%;transform:scaleX(0.849);">0,000000</div>
<div class="t v" style="top:473.66px;font-size:10.5px;line-height:14px;color:#0c0c0c;right:299.00px;transform-origin:100% 50%;text-align:right;transform:scaleX(0.849);">0,00</div>
<svg class="a" style="left:728px;top:475.8px" width="10" height="10" viewBox="0 0 10 10"><rect x="0.5" y="0.5" width="9" height="9" fill="#fff" stroke="#b9bdc1"/><path d="M2.2 5 L4.2 7.2 L7.8 2.6" fill="none" stroke="#111" stroke-width="1.5"/></svg>
<div class="t v" style="top:473.66px;font-size:10.5px;line-height:14px;color:#0c0c0c;right:171.40px;transform-origin:100% 50%;text-align:right;transform:scaleX(0.849);">-100 000,00</div>
<div class="t v" style="top:473.66px;font-size:10.5px;line-height:14px;color:#0c0c0c;left:840.5px;transform-origin:0 50%;transform:scaleX(0.849);">3070</div>
<div class="t v" style="top:473.66px;font-size:10.5px;line-height:14px;color:#0c0c0c;left:916px;transform-origin:0 50%;transform:scaleX(0.849);">Akonto</div>
<svg class="a" style="left:15px;top:477px" width="6" height="8" viewBox="0 0 6 8"><path d="M1 0.8 L4.6 4 L1 7.2" fill="none" stroke="#111" stroke-width="1.7"/></svg>
<div class="a" style="left:396.8px;top:451.6px;width:52.5px;height:18px;border:2.3px solid #588820;border-radius:1px;box-shadow:1.5px 1.5px 2px rgba(60,80,30,.5)"></div>
<div class="a" style="left:396px;top:474px;width:53.3px;height:17.7px;border:2.3px solid #588820;border-radius:1px;box-shadow:1.5px 1.5px 2px rgba(60,80,30,.5)"></div>
<div class="a" style="left:976.3px;top:359.6px;width:2px;height:2px;background:#222;"></div>
</body></html>
